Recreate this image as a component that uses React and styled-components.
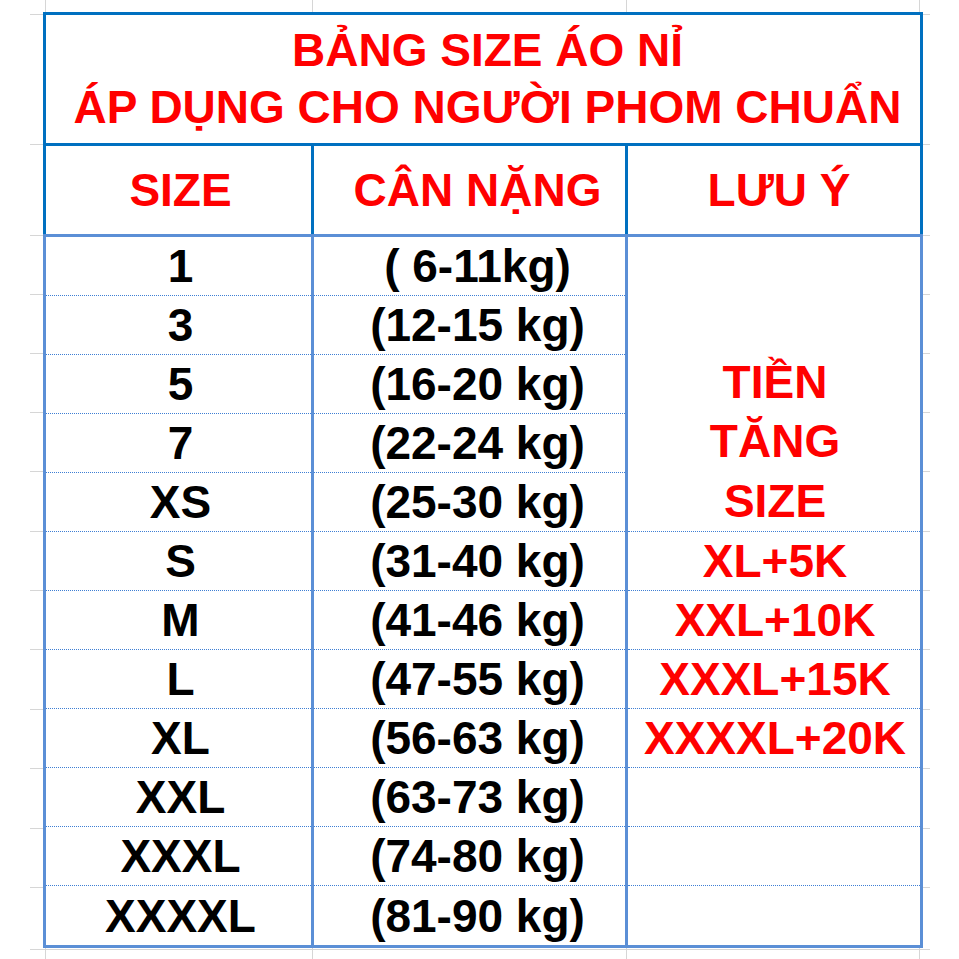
import React from "react";
import styled, { createGlobalStyle } from "styled-components";

const DARK = "#0070c0";
const LIGHT = "#5b8fd6";
const DOT = "#3f7fd4";
const GRID = "#d6d6d6";

const Global = createGlobalStyle`
  html, body { margin: 0; padding: 0; background: #fff; }
  body { font-family: "Liberation Sans", Arial, sans-serif; }
`;

const hLines = [14, 144, 235, 294, 353, 412, 471, 531, 590, 649, 709, 768, 828, 887, 949];
const vLines = [15, 282, 596, 889];

const gridBg = [
  ...hLines.map(() => `linear-gradient(${GRID}, ${GRID})`),
  ...vLines.map(() => `linear-gradient(${GRID}, ${GRID})`),
].join(", ");
const gridPos = [
  ...hLines.map((y) => `0 ${y}px`),
  ...vLines.map((x) => `${x}px 0`),
].join(", ");
const gridSize = [
  ...hLines.map(() => `100% 1px`),
  ...vLines.map(() => `1px 100%`),
].join(", ");

const Page = styled.div`
  width: 959px;
  height: 959px;
  overflow: hidden;
  background: #fff;
`;

const Sheet = styled.div`
  margin-left: 30px;
  width: 900px;
  height: 959px;
  padding: 12px 0 0 13px;
  box-sizing: border-box;
  background-color: #fff;
  background-image: ${gridBg};
  background-position: ${gridPos};
  background-size: ${gridSize};
  background-repeat: no-repeat;
`;

const Table = styled.table`
  border-collapse: collapse;
  table-layout: fixed;
  width: 877px;
  background: #fff;
  font-family: "Liberation Sans", Arial, sans-serif;
  font-weight: bold;
  font-size: 46px;
`;

const TitleCell = styled.th`
  height: 128px;
  border: 3px solid ${DARK};
  color: #ff0000;
  font-weight: bold;
  line-height: 57px;
  text-align: center;
  vertical-align: middle;
  padding: 0 0 0 9px;
`;

const HeadCell = styled.th`
  height: 88px;
  border: 3px solid ${DARK};
  border-bottom-color: ${LIGHT};
  color: #ff0000;
  font-weight: bold;
  text-align: center;
  vertical-align: middle;
  padding: 0 0 0 ${(p) => p.$pad}px;
`;

const Cell = styled.td`
  height: ${(p) => (p.$last ? 59 : 58)}px;
  border-left: 3px solid ${LIGHT};
  border-right: 3px solid ${LIGHT};
  border-top: 1px dotted ${DOT};
  border-bottom: ${(p) => (p.$last ? `3px solid ${LIGHT}` : `1px dotted ${DOT}`)};
  color: ${(p) => (p.$red ? "#ff0000" : "#000")};
  text-align: center;
  vertical-align: middle;
  padding: 0 0 0 ${(p) => p.$pad}px;
  line-height: 1;
  white-space: nowrap;
`;

const MergedCell = styled(Cell)`
  vertical-align: bottom;
  line-height: 59.4px;
`;

const rows = [
  ["1", "( 6-11kg)"],
  ["3", "(12-15 kg)"],
  ["5", "(16-20 kg)"],
  ["7", "(22-24 kg)"],
  ["XS", "(25-30 kg)"],
  ["S", "(31-40 kg)"],
  ["M", "(41-46 kg)"],
  ["L", "(47-55 kg)"],
  ["XL", "(56-63 kg)"],
  ["XXL", "(63-73 kg)"],
  ["XXXL", "(74-80 kg)"],
  ["XXXXL", "(81-90 kg)"],
];

const notes = {
  5: "XL+5K",
  6: "XXL+10K",
  7: "XXXL+15K",
  8: "XXXXL+20K",
};

export default function App() {
  return (
    <Page>
      <Global />
      <Sheet>
        <Table>
          <colgroup>
            <col style={{ width: 268 }} />
            <col style={{ width: 314 }} />
            <col style={{ width: 295 }} />
          </colgroup>
          <thead>
            <tr>
              <TitleCell colSpan={3}>
                BẢNG SIZE ÁO NỈ
                <br />
                ÁP DỤNG CHO NGƯỜI PHOM CHUẨN
              </TitleCell>
            </tr>
            <tr>
              <HeadCell $pad={4}>SIZE</HeadCell>
              <HeadCell $pad={16}>CÂN NẶNG</HeadCell>
              <HeadCell $pad={10}>LƯU Ý</HeadCell>
            </tr>
          </thead>
          <tbody>
            {rows.map(([size, weight], i) => {
              const last = i === rows.length - 1;
              let note = null;
              if (i === 0) {
                note = (
                  <MergedCell rowSpan={5} $red $pad={2}>
                    TIỀN
                    <br />
                    TĂNG
                    <br />
                    SIZE
                  </MergedCell>
                );
              } else if (i >= 5) {
                note = (
                  <Cell $red $last={last} $pad={2}>
                    {notes[i] || ""}
                  </Cell>
                );
              }
              return (
                <tr key={size}>
                  <Cell $last={last} $pad={4}>{size}</Cell>
                  <Cell $last={last} $pad={16}>{weight}</Cell>
                  {note}
                </tr>
              );
            })}
          </tbody>
        </Table>
      </Sheet>
    </Page>
  );
}
